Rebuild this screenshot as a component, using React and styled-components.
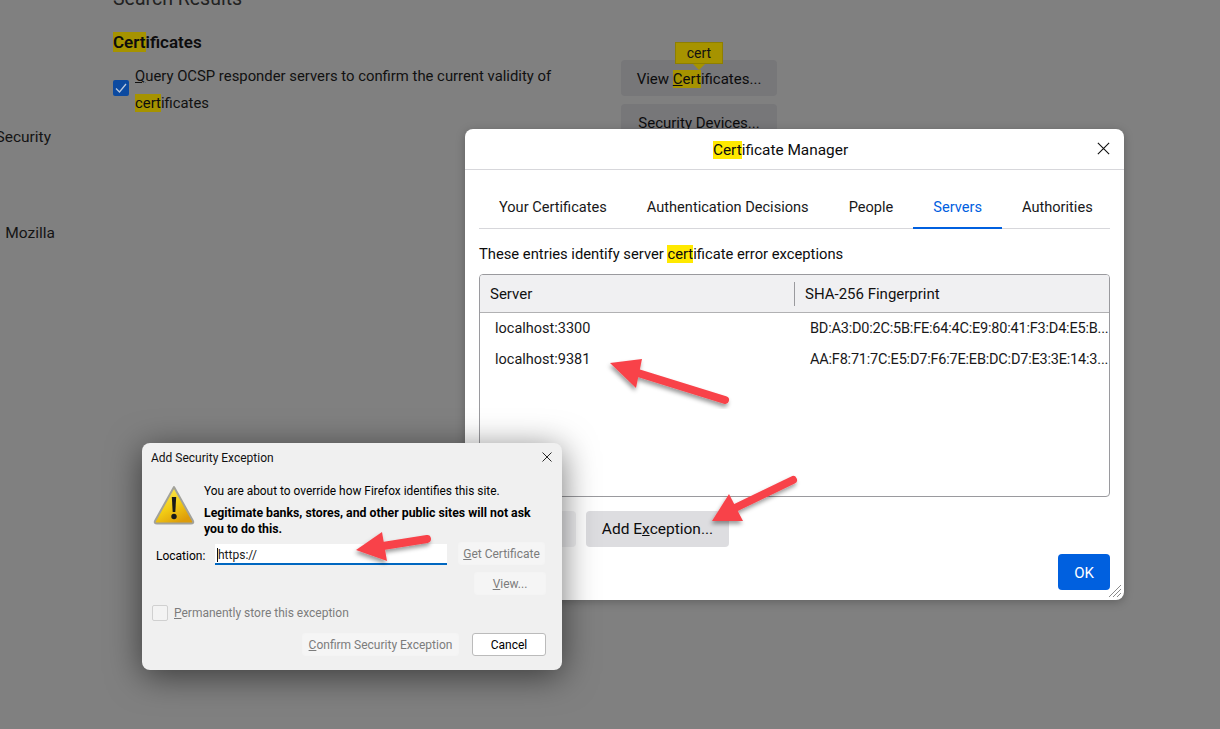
import React from 'react';
import styled, { createGlobalStyle } from 'styled-components';

const uiFont = `Roboto, 'Liberation Sans', sans-serif`;

const GlobalStyle = createGlobalStyle`
  html, body {
    margin: 0;
    padding: 0;
    background: #808080;
    font-family: ${uiFont};
    color: #111;
  }
`;

const Page = styled.div`
  position: relative;
  width: 1220px;
  height: 729px;
  overflow: hidden;
  background: #808080;
  display: flex;
`;

const Sidebar = styled.nav`
  width: 113px;
  flex: none;
  display: flex;
  flex-direction: column;
  padding-top: 127px;
  gap: 76px;
  font-size: 15.5px;
  color: #141414;
`;

const SideItem = styled.div`
  height: 20px;
  line-height: 20px;
  white-space: nowrap;
  display: flex;
  justify-content: flex-end;
  width: ${({ $w }) => $w}px;
`;

const Content = styled.main`
  width: 664px;
  margin-top: -12px;
`;

const ResultsTitle = styled.div`
  font-size: 19.5px;
  line-height: 22px;
  height: 22px;
  color: #222;
`;

const SectionTitle = styled.h2`
  margin: 20px 0 0;
  height: 24px;
  font-size: 17px;
  line-height: 24px;
  font-weight: 600;
  color: #0c0c0d;
`;

const Mark = styled.span`
  background: ${({ $dim }) => ($dim ? '#a69300' : '#ffe900')};
  color: #0c0c0d;
`;

const OptionRow = styled.div`
  display: flex;
  justify-content: space-between;
  margin-top: -5px;
`;

const OptionLabel = styled.label`
  display: flex;
  align-items: center;
  gap: 6px;
  width: 480px;
  height: 54px;
  padding-top: 14px;
  font-size: 14.85px;
  line-height: 27px;
`;

const CheckBox = styled.span`
  flex: none;
  width: 16px;
  height: 16px;
  margin-top: -4px;
  border-radius: 2px;
  background: #0c4aa0;
  display: flex;
  align-items: center;
  justify-content: center;
`;

const SideButtons = styled.div`
  display: flex;
  flex-direction: column;
  gap: 8px;
  width: 156px;
  margin-top: 11px;
`;

const PageButton = styled.button`
  position: relative;
  height: 36px;
  width: 156px;
  border: 0;
  border-radius: 4px;
  background: #777779;
  font: 15px ${uiFont};
  color: #0c0c0d;
  padding: 2px 0 0;
`;

const Tooltip = styled.div`
  position: absolute;
  left: 54px;
  top: -18px;
  width: 48px;
  height: 22px;
  box-sizing: border-box;
  background: #a69300;
  border: 1px solid #8f7f00;
  font-size: 14px;
  line-height: 20px;
  text-align: center;
  color: #111;
  &::after {
    content: '';
    position: absolute;
    left: 17px;
    top: 21px;
    border: 6px solid transparent;
    border-top-color: #a69300;
    border-bottom: 0;
  }
`;

const Manager = styled.section`
  position: absolute;
  left: 465px;
  top: 129px;
  width: 659px;
  height: 471px;
  box-sizing: border-box;
  background: #fff;
  border-radius: 8px;
  box-shadow: 0 2px 10px rgba(0, 0, 0, 0.25);
  display: flex;
  flex-direction: column;
`;

const ManagerTitle = styled.header`
  position: relative;
  flex: none;
  height: 41px;
  box-sizing: border-box;
  padding-right: 28px;
  border-bottom: 1px solid #d7d7db;
  font-size: 15.4px;
  line-height: 42px;
  text-align: center;
  color: #0c0c0d;
`;

const CloseButton = styled.span`
  position: absolute;
  display: flex;
  right: ${({ $right }) => $right}px;
  top: ${({ $top }) => $top}px;
`;

const ManagerBody = styled.div`
  flex: 1;
  display: flex;
  flex-direction: column;
  padding: 16px 14px 10px;
`;

const Tabs = styled.div`
  display: flex;
  height: 42px;
  flex: none;
  border-bottom: 1px solid #d7d7db;
`;

const Tab = styled.div`
  flex: none;
  white-space: nowrap;
  padding: 0 20px;
  margin-bottom: -1px;
  font-size: 14.6px;
  line-height: 42px;
  color: ${({ $active }) => ($active ? '#0060df' : '#18181a')};
  border-bottom: 2px solid ${({ $active }) => ($active ? '#0060df' : 'transparent')};
`;

const Description = styled.p`
  margin: 14px 0 0;
  height: 22px;
  font-size: 14.75px;
  line-height: 22px;
  color: #0c0c0d;
`;

const Table = styled.div`
  flex: none;
  margin-top: 9px;
  height: 223px;
  box-sizing: border-box;
  border: 1px solid #9a9a9e;
  border-radius: 4px;
  overflow: hidden;
`;

const HeadRow = styled.div`
  display: grid;
  grid-template-columns: 314px 1fr;
  height: 38px;
  box-sizing: border-box;
  background: #f0f0f2;
  border-bottom: 1px solid #b1b1b3;
  font-size: 15px;
  align-items: center;
`;

const HeadCell = styled.div`
  padding-left: 10px;
  height: 24px;
  line-height: 24px;
  ${({ $split }) => $split && 'border-left: 1px solid #9a9a9e;'}
`;

const Row = styled.div`
  display: grid;
  grid-template-columns: 315px 1fr;
  height: 31px;
  padding-left: 15px;
  font-size: 14.5px;
  line-height: 32px;
  color: #18181a;
  white-space: nowrap;
`;

const Fingerprint = styled.span`
  letter-spacing: -0.2px;
`;

const ManagerButtons = styled.div`
  display: flex;
  gap: 10px;
  margin-top: 14px;
`;

const GreyButton = styled.button`
  height: 36px;
  width: ${({ $w }) => $w}px;
  border: 0;
  border-radius: 4px;
  background: ${({ $light }) => ($light ? '#f0f0f2' : '#dddde0')};
  font: 15.5px ${uiFont};
  color: #0c0c0d;
  padding: 0;
`;

const OkRow = styled.div`
  display: flex;
  justify-content: flex-end;
  margin-top: 7px;
`;

const OkButton = styled.button`
  width: 52px;
  height: 36px;
  border: 0;
  border-radius: 4px;
  background: #0060df;
  color: #fff;
  font: 15px ${uiFont};
  padding: 2px 0 0;
`;

const Grip = styled.svg`
  position: absolute;
  right: 2px;
  bottom: 2px;
`;

const ExceptionDialog = styled.section`
  position: absolute;
  left: 142px;
  top: 443px;
  width: 420px;
  height: 227px;
  box-sizing: border-box;
  background: #f0f0f0;
  border-radius: 8px;
  box-shadow: 0 6px 34px rgba(0, 0, 0, 0.55);
  font-size: 12px;
  color: #000;
`;

const ExceptionTitle = styled.header`
  position: relative;
  height: 29px;
  padding-left: 9px;
  line-height: 30px;
  font-size: 12px;
  color: #111;
`;

const ExceptionBody = styled.div`
  padding: 0 16px 0 10px;
  display: flex;
  flex-direction: column;
`;

const Message = styled.div`
  display: flex;
  gap: 8px;
  margin-top: 11px;
  height: 59px;
`;

const IconSlot = styled.span`
  flex: none;
  width: 44px;
  margin-top: 1px;
`;

const MessageText = styled.div`
  width: 336px;
  line-height: 16px;
  & > p {
    margin: 0 0 6px;
    font-size: 11.9px;
  }
  & > p:last-child {
    font-weight: 700;
    font-size: 12.3px;
  }
`;

const LocationRow = styled.div`
  display: flex;
  align-items: center;
  height: 23px;
`;

const LocationLabel = styled.label`
  width: 59px;
  margin-top: 4px;
  padding-left: 4px;
  box-sizing: border-box;
`;

const LocationInput = styled.div`
  width: 232px;
  height: 21px;
  margin: 2px 11px 0 4px;
  box-sizing: border-box;
  background: #fff;
  border-bottom: 2px solid #0067c0;
  padding-left: 2px;
  line-height: 23px;
  color: #1a1a1a;
`;

const Caret = styled.span`
  border-left: 1px solid #111;
`;

const SmallButton = styled.button`
  height: 23px;
  width: ${({ $w }) => $w}px;
  padding: 0;
  box-sizing: border-box;
  border: 1px solid ${({ $on }) => ($on ? '#bbb' : '#f4f4f4')};
  border-radius: 3px;
  background: ${({ $on }) => ($on ? '#fff' : '#f5f5f5')};
  color: ${({ $on }) => ($on ? '#000' : '#7c7c7c')};
  font: 12px ${uiFont};
`;

const ViewRow = styled.div`
  display: flex;
  justify-content: flex-end;
  margin-top: 7px;
`;

const StoreRow = styled.label`
  display: flex;
  align-items: center;
  gap: 6px;
  margin-top: 10px;
  height: 16px;
  color: #7c7c7c;
`;

const EmptyCheck = styled.span`
  width: 14px;
  height: 14px;
  border: 1px solid #d0d0d0;
  border-radius: 2px;
  background: #f3f3f3;
`;

const DialogButtons = styled.div`
  display: flex;
  justify-content: flex-end;
  gap: 13px;
  margin-top: 12px;
`;

const ArrowLayer = styled.svg`
  position: absolute;
  left: 0;
  top: 0;
  pointer-events: none;
`;

const X = ({ size }) => (
  <svg width={size} height={size} viewBox="0 0 16 16">
    <path d="M2 2 L14 14 M14 2 L2 14" stroke="#111" strokeWidth="1.2" fill="none" />
  </svg>
);

const WarningIcon = () => (
  <svg width="44" height="42" viewBox="0 0 44 42">
    <defs>
      <linearGradient id="warn" x1="0" y1="0" x2="0.6" y2="1">
        <stop offset="0" stopColor="#fff36b" />
        <stop offset="0.6" stopColor="#f2cc14" />
        <stop offset="1" stopColor="#dd9c0a" />
      </linearGradient>
    </defs>
    <path d="M22 3 L41 37 Q42 39.500 39 39.500 L5 39.500 Q2 39.500 3 37 Z" fill="url(#warn)" stroke="#a2a29a" strokeWidth="2" strokeLinejoin="round" />
    <path d="M19.800 13 L24.200 13 L23.300 28 L20.700 28 Z" fill="#1a1a1a" />
    <circle cx="22" cy="32.500" r="2.700" fill="#1a1a1a" />
  </svg>
);

// tip, the two barbs, then the rounded tail of each annotation arrow
const ARROWS = [
  { tip: [610, 363], a: [642, 359], b: [636, 388], neck: [638, 373], tail: [725, 400] },
  { tip: [712, 521], a: [729, 494], b: [743, 521], neck: [735, 508], tail: [793, 480] },
  { tip: [356, 550], a: [382, 532], b: [387, 561], neck: [383, 546], tail: [427, 539] },
];

const Arrows = () => (
  <ArrowLayer width="1220" height="729" viewBox="0 0 1220 729">
    <defs>
      <filter id="arrowShadow" x="-20%" y="-20%" width="140%" height="140%">
        <feDropShadow dx="-1" dy="3" stdDeviation="2" floodColor="#000" floodOpacity="0.4" />
      </filter>
    </defs>
    {ARROWS.map((ar, i) => (
      <g key={i} filter="url(#arrowShadow)">
        <line x1={ar.neck[0]} y1={ar.neck[1]} x2={ar.tail[0]} y2={ar.tail[1]} stroke="#f8434a" strokeWidth="8" strokeLinecap="round" />
        <polygon points={[ar.tip, ar.a, ar.b].map(p => p.join(',')).join(' ')} fill="#f8434a" />
      </g>
    ))}
  </ArrowLayer>
);

export default function App() {
  return (
    <>
      <GlobalStyle />
      <Page>
        <Sidebar>
          <SideItem $w={51}>Security</SideItem>
          <SideItem $w={55}>Mozilla</SideItem>
        </Sidebar>
        <Content>
          <ResultsTitle>Search Results</ResultsTitle>
          <SectionTitle><Mark $dim>Cert</Mark>ificates</SectionTitle>
          <OptionRow>
            <OptionLabel>
              <CheckBox>
                <svg width="12" height="12" viewBox="0 0 12 12">
                  <path d="M1 6.500 L4.500 10 L11 2" stroke="#b9c8dc" strokeWidth="1.300" fill="none" />
                </svg>
              </CheckBox>
              <span><u>Q</u>uery OCSP responder servers to confirm the current validity of <Mark $dim>cert</Mark>ificates</span>
            </OptionLabel>
            <SideButtons>
              <PageButton>
                View <Mark $dim><u>C</u>ert</Mark>ificates...
                <Tooltip>cert</Tooltip>
              </PageButton>
              <PageButton>Security Devices...</PageButton>
            </SideButtons>
          </OptionRow>
        </Content>

        <Manager>
          <ManagerTitle>
            <Mark>Cert</Mark>ificate Manager
            <CloseButton $right={13} $top={12}><X size={15} /></CloseButton>
          </ManagerTitle>
          <ManagerBody>
            <Tabs>
              <Tab>Your Certificates</Tab>
              <Tab>Authentication Decisions</Tab>
              <Tab>People</Tab>
              <Tab $active>Servers</Tab>
              <Tab>Authorities</Tab>
            </Tabs>
            <Description>These entries identify server <Mark>cert</Mark>ificate error exceptions</Description>
            <Table>
              <HeadRow>
                <HeadCell>Server</HeadCell>
                <HeadCell $split>SHA-256 Fingerprint</HeadCell>
              </HeadRow>
              <Row><span>localhost:3300</span><Fingerprint>BD:A3:D0:2C:5B:FE:64:4C:E9:80:41:F3:D4:E5:B...</Fingerprint></Row>
              <Row><span>localhost:9381</span><Fingerprint>AA:F8:71:7C:E5:D7:F6:7E:EB:DC:D7:E3:3E:14:3...</Fingerprint></Row>
            </Table>
            <ManagerButtons>
              <GreyButton $w={97} $light />
              <GreyButton $w={143}>Add E<u>x</u>ception...</GreyButton>
            </ManagerButtons>
            <OkRow><OkButton>OK</OkButton></OkRow>
          </ManagerBody>
          <Grip width="14" height="14" viewBox="0 0 14 14">
            <path d="M1 13 L13 1 M5 13 L13 5 M9 13 L13 9" stroke="#8a8a8a" strokeWidth="1" />
          </Grip>
        </Manager>

        <ExceptionDialog>
          <ExceptionTitle>
            Add Security Exception
            <CloseButton $right={9} $top={8}><X size={12} /></CloseButton>
          </ExceptionTitle>
          <ExceptionBody>
            <Message>
              <IconSlot><WarningIcon /></IconSlot>
              <MessageText>
                <p>You are about to override how Firefox identifies this site.</p>
                <p>Legitimate banks, stores, and other public sites will not ask you to do this.</p>
              </MessageText>
            </Message>
            <LocationRow>
              <LocationLabel>Location:</LocationLabel>
              <LocationInput><Caret />https://</LocationInput>
              <SmallButton $w={87}><u>G</u>et Certificate</SmallButton>
            </LocationRow>
            <ViewRow><SmallButton $w={72}><u>V</u>iew...</SmallButton></ViewRow>
            <StoreRow><EmptyCheck /><span><u>P</u>ermanently store this exception</span></StoreRow>
            <DialogButtons>
              <SmallButton $w={157}><u>C</u>onfirm Security Exception</SmallButton>
              <SmallButton $w={74} $on>Cancel</SmallButton>
            </DialogButtons>
          </ExceptionBody>
        </ExceptionDialog>

        <Arrows />
      </Page>
    </>
  );
}
